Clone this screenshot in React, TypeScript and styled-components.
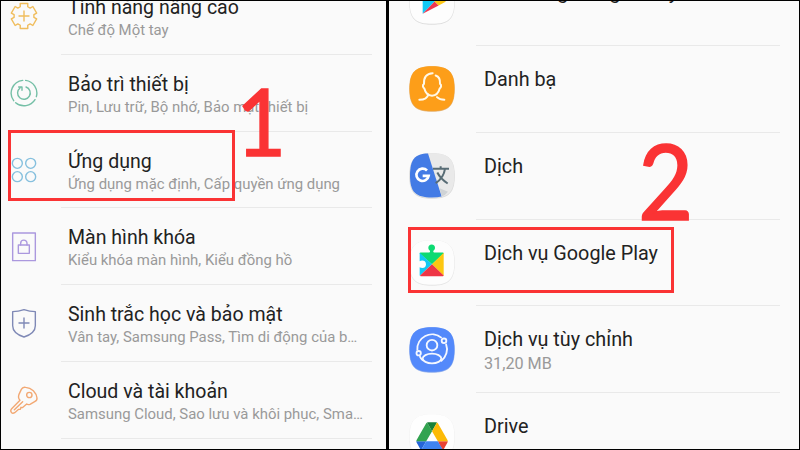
import React from 'react';
import styled, { createGlobalStyle } from 'styled-components';

const GlobalStyle = createGlobalStyle`
  * { box-sizing: border-box; }
  body { margin: 0; background: #000; }
`;

const Frame = styled.main`
  position: relative;
  display: grid;
  grid-template-columns: 385px 410px;
  column-gap: 3px;
  width: 800px;
  height: 450px;
  padding: 1px;
  overflow: hidden;
  background: #000;
  font-family: Roboto, "Noto Sans", sans-serif;
`;

const Panel = styled.section`
  height: 448px;
  overflow: hidden;
  background: #fafafa;
`;

const List = styled.ul<{ $offset: number }>`
  list-style: none;
  margin: ${(p) => p.$offset}px 0 0;
  padding: 0;
`;

const SettingRow = styled.li`
  display: grid;
  grid-template-columns: 60px 311px;
  height: 76.75px;
`;

const AppRow = styled.li`
  display: grid;
  grid-template-columns: 87px 304px;
  height: 86.85px;
`;

const IconCell = styled.div<{ $shift?: number }>`
  display: flex;
  align-items: center;
  justify-content: center;
  padding-right: ${(p) => p.$shift ?? 0}px;
  svg { display: block; flex: none; }
`;

const Content = styled.div<{ $top: number; $pad: number }>`
  padding: ${(p) => p.$top}px 0 0 ${(p) => p.$pad}px;
  border-bottom: 1px solid #e9e9e9;
  white-space: nowrap;
  min-width: 0;
`;

const Title = styled.div<{ $size: number }>`
  font-size: ${(p) => p.$size}px;
  line-height: 24px;
  color: #222;
`;

const Subtitle = styled.div<{ $size: number; $gap: number }>`
  margin-top: ${(p) => p.$gap}px;
  font-size: ${(p) => p.$size}px;
  line-height: 20px;
  color: #999;
`;

const Highlight = styled.div<{ $x: number; $y: number; $w: number; $h: number }>`
  position: absolute;
  left: ${(p) => p.$x}px;
  top: ${(p) => p.$y}px;
  width: ${(p) => p.$w}px;
  height: ${(p) => p.$h}px;
  border: 3px solid #fa3334;
`;

const StepNumber = styled.div<{ $x: number; $y: number; $size: number; $sx: number }>`
  position: absolute;
  left: ${(p) => p.$x}px;
  top: ${(p) => p.$y}px;
  font: 400 ${(p) => p.$size}px/1 Lato, sans-serif;
  color: #fa3334;
  -webkit-text-stroke: 1.6px #fa3334;
  stroke-linejoin: round;
  transform: scaleX(${(p) => p.$sx});
  transform-origin: 0 0;
`;

const LineIcon = ({ color, children }: { color: string; children: React.ReactNode }) => (
  <svg width="30" height="30" viewBox="-45 -45 90 90" fill="none" stroke={color}
    strokeWidth="4.2" strokeLinecap="round" strokeLinejoin="round">
    {children}
  </svg>
);

const gearPoints = Array.from({ length: 6 }, (_, i) =>
  [[-17, 39], [17, 39], [22, 30], [38, 30]].map(([deg, r]) => {
    const a = ((i * 60 + deg - 90) * Math.PI) / 180;
    return `${(r * Math.cos(a)).toFixed(1)},${(r * Math.sin(a)).toFixed(1)}`;
  }).join(' ')
).join(' ');

const GearIcon = () => (
  <LineIcon color="#f0bd5c">
    <polygon points={gearPoints} />
    <path d="M-15 0H15M0-15V15" />
  </LineIcon>
);

const CareIcon = () => (
  <LineIcon color="#74bfa6">
    <path d="M5-38A38.500 38.500 0 0 1 37 11M33 20A38.500 38.500 0 0 1-25 29M-31 23A38.500 38.500 0 0 1-4-38" />
    <path d="M6-18A19 19 0 1 1-12-15M-16-18H-6V-8" />
  </LineIcon>
);

const AppsIcon = () => (
  <LineIcon color="#86c0de">
    <circle cx="-20" cy="-20" r="15" />
    <circle cx="20" cy="-20" r="15" />
    <circle cx="-20" cy="20" r="15" />
    <circle cx="20" cy="20" r="15" />
  </LineIcon>
);

const LockIcon = () => (
  <LineIcon color="#ab98de">
    <rect x="-34" y="-42" width="68" height="83" />
    <rect x="-17" y="-6" width="33" height="25" />
    <path d="M-10-6V-11A9.500 9.500 0 0 1 9-11V-6" />
  </LineIcon>
);

const ShieldIcon = () => (
  <LineIcon color="#7f89b6">
    <path d="M0-40Q-17-34-34-34V8C-34 27-18 36 0 42C18 36 34 27 34 8V-34Q17-34 0-40Z" />
    <path d="M-15 0H15M0-15V15" />
  </LineIcon>
);

const KeyIcon = () => (
  <LineIcon color="#f2a873">
    <path d="M-15-17L-8-32Q-4-40 5-38Q18-37 28-28Q38-18 39-6Q40 1 32 5L18 13Q12 15 8 12L-5 23L-9 22L-11 28L-16 28L-28 38Q-34 42-38 37Q-42 32-37 26L-12 1Q-19-6-15-17Z" />
    <circle cx="16" cy="-15" r="8" />
    <path d="M-29 29L-4 5" />
  </LineIcon>
);

const squircle = 'M0-67C50-67 67-50 67 0C67 50 50 67 0 67C-50 67-67 50-67 0C-67-50-50-67 0-67Z';

const AppIcon = ({ fill, edge, children }: { fill: string; edge: string; children: React.ReactNode }) => (
  <svg width="48" height="48" viewBox="-72 -70.5 144 144" fill="none">
    <path d={squircle} transform="translate(0 1.500)" fill={edge} stroke={edge} strokeWidth="2" />
    <path d={squircle} fill={fill} />
    {children}
  </svg>
);

const PlayStoreIcon = () => (
  <AppIcon fill="#fdfdfd" edge="#d9d9d9">
    <path d="M-28-37L8 0L-28 37Z" fill="#12c9f5" />
    <path d="M-28-37L20-12L8 0Z" fill="#0ddc75" />
    <path d="M-28 37L8 0L20 12Z" fill="#ee3650" />
    <path d="M20-12L42 0L20 12L8 0Z" fill="#fdc713" />
  </AppIcon>
);

const ContactsIcon = () => (
  <AppIcon fill="#fd9e19" edge="#e3a555">
    <g stroke="#fff8e8" strokeWidth="6" strokeLinecap="round" strokeLinejoin="round">
      <path d="M2-46C-17-45-25-34-24-14C-30-10-27-3-23 0C-20 12-12 21 0 22C12 21 20 12 23 0C28-4 29-11 24-14C25-27 20-36 11-39" />
      <path d="M-11 18C-14 30-28 34-38 34M15 26Q23 34 37 34" />
    </g>
  </AppIcon>
);

const TranslateIcon = () => (
  <AppIcon fill="#e9e9e9" edge="#d5d5d5">
    <path d="M-12-66C-51-65-66-49-66 0C-66 49-50 66 0 66Q18 66 29 63Z" fill="#437be5" />
    <path d="M29 63L23 38L48 49Q40 60 29 63Z" fill="#cfd3d6" />
    <path d="M-15-15A18.500 18.500 0 1 0-10 1H-28" stroke="#fff" strokeWidth="8" />
    <g stroke="#586c75" strokeWidth="6">
      <path d="M3-20H51M26-28V-20M39-20Q35 7 11 23M16-9Q25 9 47 24" />
    </g>
  </AppIcon>
);

const PlayServicesIcon = () => (
  <AppIcon fill="#fdfdfd" edge="#e2e2e2">
    <path d="M-37-27Q-37-30-34-30H-8Q-4-32-7-36A10 10 0 1 1 5-36Q2-32 6-30H32Q35-30 35-27L0 5Z" fill="#0cda72" />
    <path d="M-37-29L0 5L-37 40V14C-32 17-18 19-18 5C-18-8-32-7-37-4Z" fill="#12c8f3" />
    <path d="M35-29V40L0 5Z" fill="#fdc711" />
    <path d="M-36 39L0 5L35 39Q35 41 32 41H-34Z" fill="#ee3545" />
  </AppIcon>
);

const CustomServiceIcon = () => (
  <AppIcon fill="#5389fb" edge="#7da1eb">
    <g stroke="#f5f8ff" strokeWidth="5.500">
      <path d="M-44 3A44.500 44.500 0 0 1 29-35M42-17A45 45 0 0 1 27 35M-37 20Q-34 27-27 33" />
      <circle cx="0" cy="-13" r="16" />
      <ellipse cx="0" cy="27" rx="28" ry="14.500" />
      <circle cx="36" cy="-26" r="7" />
      <circle cx="-40" cy="11" r="6.500" />
    </g>
  </AppIcon>
);

const DriveIcon = () => (
  <AppIcon fill="#fefefe" edge="#ededed">
    <g transform="translate(-47 -43) scale(1.08)">
      <path d="m6.600 66.850 3.850 6.650c.8 1.400 1.950 2.500 3.300 3.300l13.750-23.800h-27.500c0 1.550.4 3.100 1.200 4.500z" fill="#2565d8" />
      <path d="m43.650 25-13.750-23.800c-1.350.8-2.500 1.900-3.300 3.300l-25.400 44a9.060 9.060 0 0 0 -1.200 4.500h27.500z" fill="#32a350" />
      <path d="m73.550 76.800c1.350-.8 2.500-1.900 3.300-3.300l1.600-2.750 7.650-13.250c.8-1.400 1.200-2.950 1.200-4.500h-27.500l5.850 11.500z" fill="#e94335" />
      <path d="m43.650 25 13.750-23.800c-1.350-.8-2.900-1.200-4.500-1.200h-18.500c-1.600 0-3.150.45-4.500 1.200z" fill="#188038" />
      <path d="m59.800 53h-32.300l-13.750 23.800c1.350.8 2.900 1.200 4.500 1.200h50.800c1.600 0 3.150-.45 4.500-1.200z" fill="#3f83f0" />
      <path d="m73.400 26.500-12.700-22c-.8-1.400-1.950-2.500-3.300-3.300l-13.750 23.800 16.150 28h27.450c0-1.550-.4-3.100-1.200-4.500z" fill="#fcba07" />
    </g>
  </AppIcon>
);

const settings = [
  { icon: <GearIcon />, title: 'Tính năng nâng cao', sub: 'Chế độ Một tay' },
  { icon: <CareIcon />, title: 'Bảo trì thiết bị', sub: 'Pin, Lưu trữ, Bộ nhớ, Bảo mật thiết bị' },
  { icon: <AppsIcon />, title: 'Ứng dụng', sub: 'Ứng dụng mặc định, Cấp quyền ứng dụng' },
  { icon: <LockIcon />, title: 'Màn hình khóa', sub: 'Kiểu khóa màn hình, Kiểu đồng hồ' },
  { icon: <ShieldIcon />, title: 'Sinh trắc học và bảo mật', sub: 'Vân tay, Samsung Pass, Tìm di động của b…' },
  { icon: <KeyIcon />, title: 'Cloud và tài khoản', sub: 'Samsung Cloud, Sao lưu và khôi phục, Sma…' },
];

const apps = [
  { icon: <PlayStoreIcon />, title: 'Cửa hàng Google Play' },
  { icon: <ContactsIcon />, title: 'Danh bạ' },
  { icon: <TranslateIcon />, title: 'Dịch' },
  { icon: <PlayServicesIcon />, title: 'Dịch vụ Google Play' },
  { icon: <CustomServiceIcon />, title: 'Dịch vụ tùy chỉnh', sub: '31,20 MB' },
  { icon: <DriveIcon />, title: 'Drive' },
];

export default function App() {
  return (
    <>
      <GlobalStyle />
      <Frame>
        <Panel>
          <List $offset={-23}>
            {settings.map((s) => (
              <SettingRow key={s.title}>
                <IconCell $shift={13.4}>{s.icon}</IconCell>
                <Content $top={18} $pad={7}>
                  <Title $size={19.55}>{s.title}</Title>
                  <Subtitle $size={14.92} $gap={0}>{s.sub}</Subtitle>
                </Content>
              </SettingRow>
            ))}
          </List>
        </Panel>
        <Panel>
          <List $offset={-42}>
            {apps.map((a) => (
              <AppRow key={a.title}>
                <IconCell $shift={1}>{a.icon}</IconCell>
                <Content $top={22} $pad={8}>
                  <Title $size={19.8}>{a.title}</Title>
                  {a.sub && <Subtitle $size={16.2} $gap={2}>{a.sub}</Subtitle>}
                </Content>
              </AppRow>
            ))}
          </List>
        </Panel>
        <Highlight $x={8} $y={130} $w={227} $h={71} />
        <Highlight $x={408} $y={227} $w={266} $h={66} />
        <StepNumber $x={236} $y={74} $size={93} $sx={0.93}>1</StepNumber>
        <StepNumber $x={638} $y={127} $size={105} $sx={0.91}>2</StepNumber>
      </Frame>
    </>
  );
}
